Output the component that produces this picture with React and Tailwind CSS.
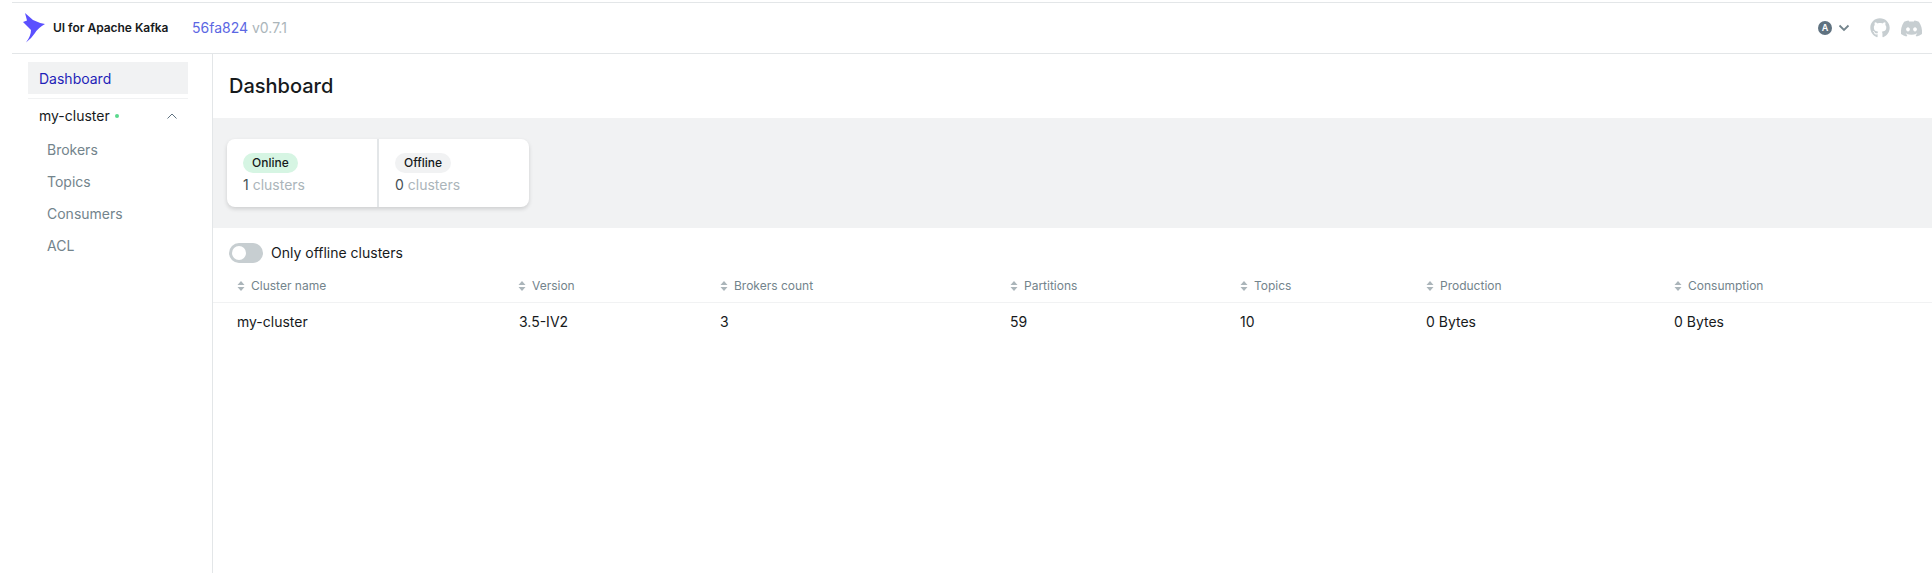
import React from "react";
import { FaGithub, FaDiscord } from "react-icons/fa";

function SortIcon() {
  return (
    <svg width="8" height="10" viewBox="0 0 8 10" className="shrink-0 mr-[6px]" fill="#ABB5BA">
      <path d="M4 0 L7.5 4 H0.5 Z" />
      <path d="M4 10 L7.5 6 H0.5 Z" />
    </svg>
  );
}

const cols = [
  ["Cluster name", "my-cluster", "w-[281px]"],
  ["Version", "3.5-IV2", "w-[202px]"],
  ["Brokers count", "3", "w-[290px]"],
  ["Partitions", "59", "w-[230px]"],
  ["Topics", "10", "w-[186px]"],
  ["Production", "0 Bytes", "w-[248px]"],
  ["Consumption", "0 Bytes", "flex-1"],
];

export default function App() {
  return (
    <div className="h-[573px] w-[1932px] overflow-hidden bg-white font-['Inter',sans-serif] text-[#171a1c] flex flex-col pl-3">
      <header className="mt-[2px] h-[52px] shrink-0 border-y border-[#e3e6e8] flex items-center">
        <div className="flex items-center w-[180px] pl-[11px] shrink-0">
          <svg width="24" height="30" viewBox="0 0 24 30" className="shrink-0 mr-[6px]">
            <path d="M2 0 L10 7 Q16 10 22 11 Q15 15 12 20 Q8 26 3 29.5 Q8 23 8 17 L0 9 L4 7.5 Z" fill="#5b50ff" />
          </svg>
          <span className="text-[12px] font-semibold whitespace-nowrap tracking-[-0.03px]">UI for Apache Kafka</span>
        </div>
        <div className="text-sm whitespace-nowrap">
          <span className="text-[#5b67e3]">56fa824</span> <span className="text-[#abb5ba]">v0.7.1</span>
        </div>
        <div className="ml-auto flex items-center pr-[9px] text-[#c7ced1]">
          <div className="w-[14px] h-[14px] rounded-full bg-[#5f7280] text-white text-[9px] font-semibold flex items-center justify-center">A</div>
          <svg width="12" height="8" viewBox="0 0 12 8" fill="none" stroke="#73848c" strokeWidth="1.8" className="ml-[6px] mr-[20px]">
            <path d="M1.5 1.5 L6 6 L10.5 1.5" />
          </svg>
          <FaGithub size={20} className="mr-[10px]" />
          <FaDiscord size={23} />
        </div>
      </header>
      <div className="flex flex-1 min-h-0">
        <aside className="w-[201px] shrink-0 border-r border-[#e3e6e8] pl-4 pr-6 pt-2">
          <div className="h-8 bg-[#f1f2f3] px-[11px] pt-[1px] flex items-center text-sm text-[#1f1fb8]">Dashboard</div>
          <div className="mt-1 border-t border-[#f1f2f3] h-[35px] px-[11px] flex items-center text-sm">
            <span>my-cluster</span>
            <span className="ml-[5px] w-1 h-1 rounded-full bg-[#5ad98d]"></span>
            <svg width="10" height="6" viewBox="0 0 10 6" fill="none" stroke="#5f7280" strokeWidth="1" className="ml-auto">
              <path d="M0.5 5.5 L5 1 L9.5 5.5" />
            </svg>
          </div>
          <div className="pl-[19px] pt-[1px] text-sm text-[#73848c]">
            {["Brokers", "Topics", "Consumers", "ACL"].map((t) => (
              <div key={t} className="h-8 flex items-center">{t}</div>
            ))}
          </div>
        </aside>
        <main className="flex-1 min-w-0">
          <div className="h-[64px] pl-4 flex items-center text-xl font-medium">Dashboard</div>
          <div className="h-[110px] bg-[#f1f2f3] pl-[14px] pt-[21px]">
            <div className="flex w-[302px] h-[68px] bg-white rounded-lg shadow-[0_2px_4px_rgba(0,0,0,0.15)]">
              <div className="w-[150px] pl-4 pt-[14px] shrink-0">
                <span className="flex w-fit items-center h-5 px-[9px] rounded-full bg-[#d6f5e3] text-xs font-medium">Online</span>
                <div className="text-sm leading-5 mt-[2px] text-[#454f54]">1 <span className="text-[#abb5ba]">clusters</span></div>
              </div>
              <div className="w-[2px] bg-[#e3e6e8] shrink-0"></div>
              <div className="pl-4 pt-[14px]">
                <span className="flex w-fit items-center h-5 px-[9px] rounded-full bg-[#f1f2f3] text-xs font-medium">Offline</span>
                <div className="text-sm leading-5 mt-[2px] text-[#454f54]">0 <span className="text-[#abb5ba]">clusters</span></div>
              </div>
            </div>
          </div>
          <div className="pl-4 pt-[15px] flex items-center h-[35px]">
            <div className="w-[34px] h-5 rounded-full bg-[#c7ced1] p-[3px]">
              <div className="w-[14px] h-[14px] rounded-full bg-white"></div>
            </div>
            <span className="ml-2 text-sm text-[#171a1c]">Only offline clusters</span>
          </div>
          <div className="flex pl-6 h-[40px] items-end pb-[8px] border-b border-[#f1f2f3] text-xs text-[#73848c]">
            {cols.map(([h, , w]) => (
              <div key={h} className={`${w} flex items-center h-4`}>
                <SortIcon />
                <span>{h}</span>
              </div>
            ))}
          </div>
          <div className="flex pl-6 h-[37px] items-center text-sm">
            {cols.map(([h, v, w], i) => (
              <div key={h} className={w}>
                {i === 1 ? <span className="ml-[1px]">{v}</span> : v}
              </div>
            ))}
          </div>
        </main>
      </div>
    </div>
  );
}
